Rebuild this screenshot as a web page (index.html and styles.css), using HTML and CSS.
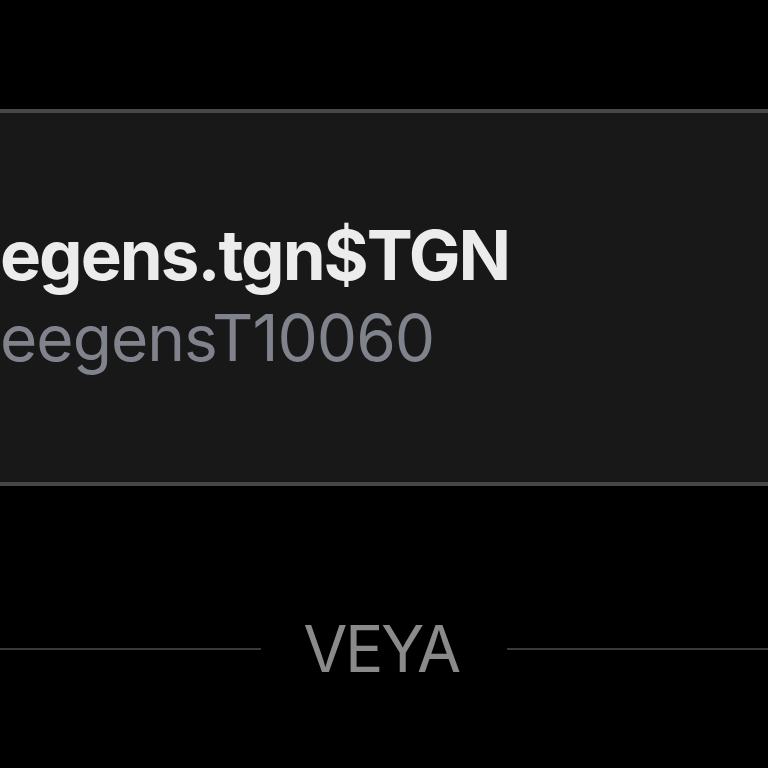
FILE: index.html
```html
<!DOCTYPE html>
<html lang="en">
<head>
  <meta charset="UTF-8">
  <title>VEYA | Token</title>
  <meta name="viewport" content="width=device-width, initial-scale=1.0">
  <link rel="stylesheet" href="styles.css">
</head>
<body>
  <div class="screen">
    <div class="token-card">
      <div class="token-text">
        <div class="token-name">egens.tgn$TGN</div>
        <div class="token-id">eegensT10060</div>
      </div>
    </div>
    <div class="brand-row">
      <span class="rule"></span>
      <span class="brand">VEYA</span>
      <span class="rule"></span>
    </div>
  </div>
</body>
</html>
```

FILE: styles.css
```css
html, body {
  margin: 0;
  padding: 0;
  height: 100%;
  background-color: #000;
  overflow: hidden;
  font-family: Inter, 'Noto Sans', sans-serif;
}
.screen {
  display: flex;
  flex-direction: column;
  padding-top: 109px;
}
.token-card {
  margin: 0 -10px;
  height: 377px;
  box-sizing: border-box;
  background-color: #181818;
  border-top: 4px solid #474747;
  border-bottom: 4px solid #474747;
  display: flex;
  flex-direction: column;
  justify-content: center;
}
.token-text {
  margin-left: 10px;
  padding-bottom: 2px;
}
.token-name {
  color: #ececec;
  font-size: 69px;
  font-weight: 700;
  line-height: 80px;
  letter-spacing: -2px;
}
.token-id {
  color: #80838b;
  font-size: 64px;
  font-weight: 400;
  line-height: 80px;
  letter-spacing: -1px;
  margin-top: 3px;
}
.brand-row {
  display: flex;
  align-items: center;
  gap: 42px;
  margin-top: 124px;
}
.rule {
  flex: 1;
  height: 2px;
  background-color: #3a3a3a;
}
.brand {
  color: #8a8a8a;
  font-size: 64px;
  font-weight: 400;
  letter-spacing: -2.5px;
  margin-right: 6px;
}
```
